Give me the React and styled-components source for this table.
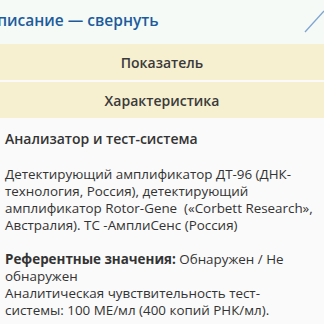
import { createGlobalStyle } from 'styled-components';
import styled from 'styled-components';

const GlobalStyle = createGlobalStyle`
  html, body {
    margin: 0;
    padding: 0;
    background: #fafafa;
    overflow: hidden;
  }
  body {
    font-family: "Open Sans", "Noto Sans", sans-serif;
    color: #333;
  }
`

const App = () => {
  return (
    <>
      <GlobalStyle />
      <Wrapper>
        <Header>
          <Title>Описание — свернуть</Title>
          <Arrow width="20" height="24" viewBox="0 0 20 24">
            <line x1="1" y1="22" x2="20" y2="1" stroke="#7fa6d0" strokeWidth="1.3" />
          </Arrow>
        </Header>
        <Table>
          <HeadCell>Показатель</HeadCell>
          <HeadCell>Характеристика</HeadCell>
          <BodyCell>
            <Caption>Анализатор и тест-система</Caption>
            <Text>
              Детектирующий амплификатор ДТ-96 (ДНК-технология, Россия), детектирующий
              амплификатор Rotor-Gene&nbsp; («Corbett Research», Австралия). ТС -АмплиСенс (Россия)
            </Text>
            <Text>
              <b>Референтные значения:</b> Обнаружен / Не обнаружен
              <br />
              Аналитическая чувствительность тест-системы: 100 МЕ/мл (400 копий РНК/мл).
            </Text>
          </BodyCell>
        </Table>
      </Wrapper>
    </>
  )
}

export default App

const Wrapper = styled.div`
  width: 324px;
  height: 324px;
  display: flex;
  flex-direction: column;
  & > * { flex-shrink: 0; }
`

const Header = styled.div`
  height: 44px;
  background: #f5faf7;
  display: flex;
  align-items: center;
  justify-content: space-between;
  overflow: hidden;
`

const Title = styled.div`
  margin-left: -15px;
  margin-top: -5px;
  font-size: 15.5px;
  font-weight: 600;
  color: #1d5c9c;
  white-space: nowrap;
`

const Arrow = styled.svg`
  align-self: flex-start;
  margin-top: 10px;
  flex-shrink: 0;
`

const Table = styled.div`
  display: flex;
  flex-direction: column;
  gap: 2px;
`

const HeadCell = styled.div`
  height: 36px;
  background: #f6f0d1;
  display: flex;
  align-items: center;
  justify-content: center;
  font-weight: 600;
  font-size: 14px;
  color: #3a3a3a;
`

const BodyCell = styled.div`
  padding: 10px 6px 0 5px;
  font-size: 13.4px;
  line-height: 17px;
`

const Caption = styled.div`
  font-size: 14px;
  font-weight: 600;
  margin-bottom: 19px;
`

const Text = styled.p`
  margin: 0 0 17px 0;
  b { font-weight: 700; }
`
